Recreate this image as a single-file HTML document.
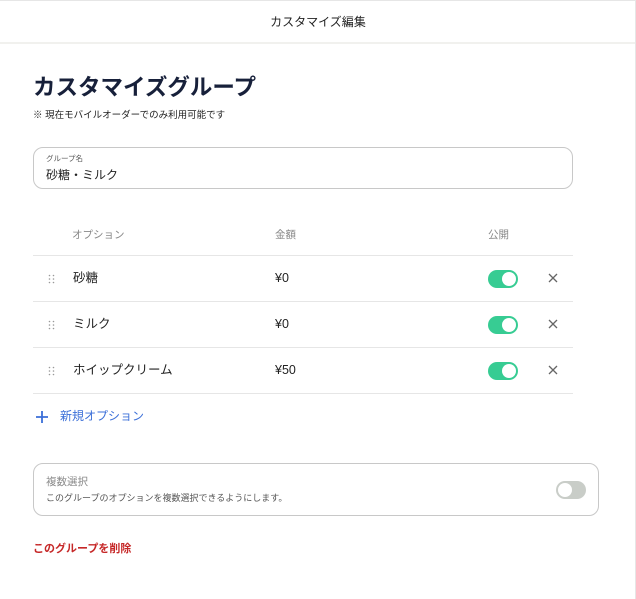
<!DOCTYPE html>
<html><head><meta charset="utf-8"><style>
*{margin:0;padding:0;box-sizing:border-box}
body{width:636px;height:599px;background:#fff;font-family:"Liberation Sans","Noto Sans CJK JP",sans-serif;color:#222;position:relative;overflow:hidden}
.a{position:absolute;line-height:16px;white-space:nowrap}
.hdr{left:0;top:0;width:636px;height:44px;border-top:1px solid #e6e6e6;border-bottom:2px solid #f1f1ee;text-align:center;line-height:42px;font-size:12px;color:#222}
.line{left:33px;width:540px;height:1px;background:#e6e6e6}
.tg{width:30px;height:18px;border-radius:9px;background:#37cc93}
.tg::after{content:"";position:absolute;right:2px;top:2px;width:14px;height:14px;border-radius:50%;background:#fff}
.r{font-size:12.5px;color:#222}
</style></head><body>
<div class="a hdr">カスタマイズ編集</div>
<div class="a" style="right:0;top:0;width:1px;height:599px;background:#e6e6e6"></div>
<div class="a" style="left:33px;top:75px;font-size:22.5px;line-height:26px;font-weight:bold;color:#17203a">カスタマイズグループ</div>
<div class="a" style="left:33px;top:108px;font-size:9.5px;color:#222">※ 現在モバイルオーダーでのみ利用可能です</div>
<div class="a" style="left:33px;top:147px;width:540px;height:42px;border:1px solid #c8c8c8;border-radius:10px"></div>
<div class="a" style="left:46px;top:151px;font-size:7.5px;color:#555">グループ名</div>
<div class="a" style="left:46px;top:167px;font-size:12px;color:#222">砂糖・ミルク</div>
<div class="a" style="left:72px;top:227px;font-size:10.5px;color:#888">オプション</div>
<div class="a" style="left:275px;top:227px;font-size:10.5px;color:#888">金額</div>
<div class="a" style="left:488px;top:227px;font-size:10.5px;color:#888">公開</div>
<div class="a line" style="top:255px"></div>
<div class="a line" style="top:301px"></div>
<div class="a line" style="top:347px"></div>
<div class="a line" style="top:393px"></div>

<svg class="a" style="left:48px;top:274px" width="8" height="10"><g fill="#999"><circle cx="1.5" cy="1.5" r=".8"/><circle cx="5.5" cy="1.5" r=".8"/><circle cx="1.5" cy="5" r=".8"/><circle cx="5.5" cy="5" r=".8"/><circle cx="1.5" cy="8.5" r=".8"/><circle cx="5.5" cy="8.5" r=".8"/></g></svg>
<div class="a r" style="left:73px;top:270px">砂糖</div>
<div class="a r" style="left:275px;top:270px">¥0</div>
<div class="a tg" style="left:488px;top:270px"></div>
<svg class="a" style="left:548px;top:273px" width="10" height="10"><path d="M1 1L9 9M9 1L1 9" stroke="#666" stroke-width="1.3"/></svg>

<svg class="a" style="left:48px;top:320px" width="8" height="10"><g fill="#999"><circle cx="1.5" cy="1.5" r=".8"/><circle cx="5.5" cy="1.5" r=".8"/><circle cx="1.5" cy="5" r=".8"/><circle cx="5.5" cy="5" r=".8"/><circle cx="1.5" cy="8.5" r=".8"/><circle cx="5.5" cy="8.5" r=".8"/></g></svg>
<div class="a r" style="left:73px;top:316px">ミルク</div>
<div class="a r" style="left:275px;top:316px">¥0</div>
<div class="a tg" style="left:488px;top:316px"></div>
<svg class="a" style="left:548px;top:319px" width="10" height="10"><path d="M1 1L9 9M9 1L1 9" stroke="#666" stroke-width="1.3"/></svg>

<svg class="a" style="left:48px;top:366px" width="8" height="10"><g fill="#999"><circle cx="1.5" cy="1.5" r=".8"/><circle cx="5.5" cy="1.5" r=".8"/><circle cx="1.5" cy="5" r=".8"/><circle cx="5.5" cy="5" r=".8"/><circle cx="1.5" cy="8.5" r=".8"/><circle cx="5.5" cy="8.5" r=".8"/></g></svg>
<div class="a r" style="left:73px;top:362px">ホイップクリーム</div>
<div class="a r" style="left:275px;top:362px">¥50</div>
<div class="a tg" style="left:488px;top:362px"></div>
<svg class="a" style="left:548px;top:365px" width="10" height="10"><path d="M1 1L9 9M9 1L1 9" stroke="#666" stroke-width="1.3"/></svg>

<svg class="a" style="left:36px;top:411px" width="12" height="12"><path d="M6 0V12M0 6H12" stroke="#3b6fd8" stroke-width="1.8"/></svg>
<div class="a" style="left:60px;top:408px;font-size:12px;color:#3b6fd8">新規オプション</div>

<div class="a" style="left:33px;top:463px;width:566px;height:53px;border:1px solid #c8c8c8;border-radius:10px"></div>
<div class="a" style="left:46px;top:474px;font-size:10.5px;color:#888">複数選択</div>
<div class="a" style="left:46px;top:490px;font-size:9px;color:#555">このグループのオプションを複数選択できるようにします。</div>
<div class="a" style="left:556px;top:481px;width:30px;height:18px;border-radius:9px;background:#c9cdc8"><div class="a" style="left:2px;top:2px;width:14px;height:14px;border-radius:50%;background:#fff"></div></div>

<div class="a" style="left:33px;top:541px;font-size:11px;font-weight:bold;color:#c62828">このグループを削除</div>
</body></html>
